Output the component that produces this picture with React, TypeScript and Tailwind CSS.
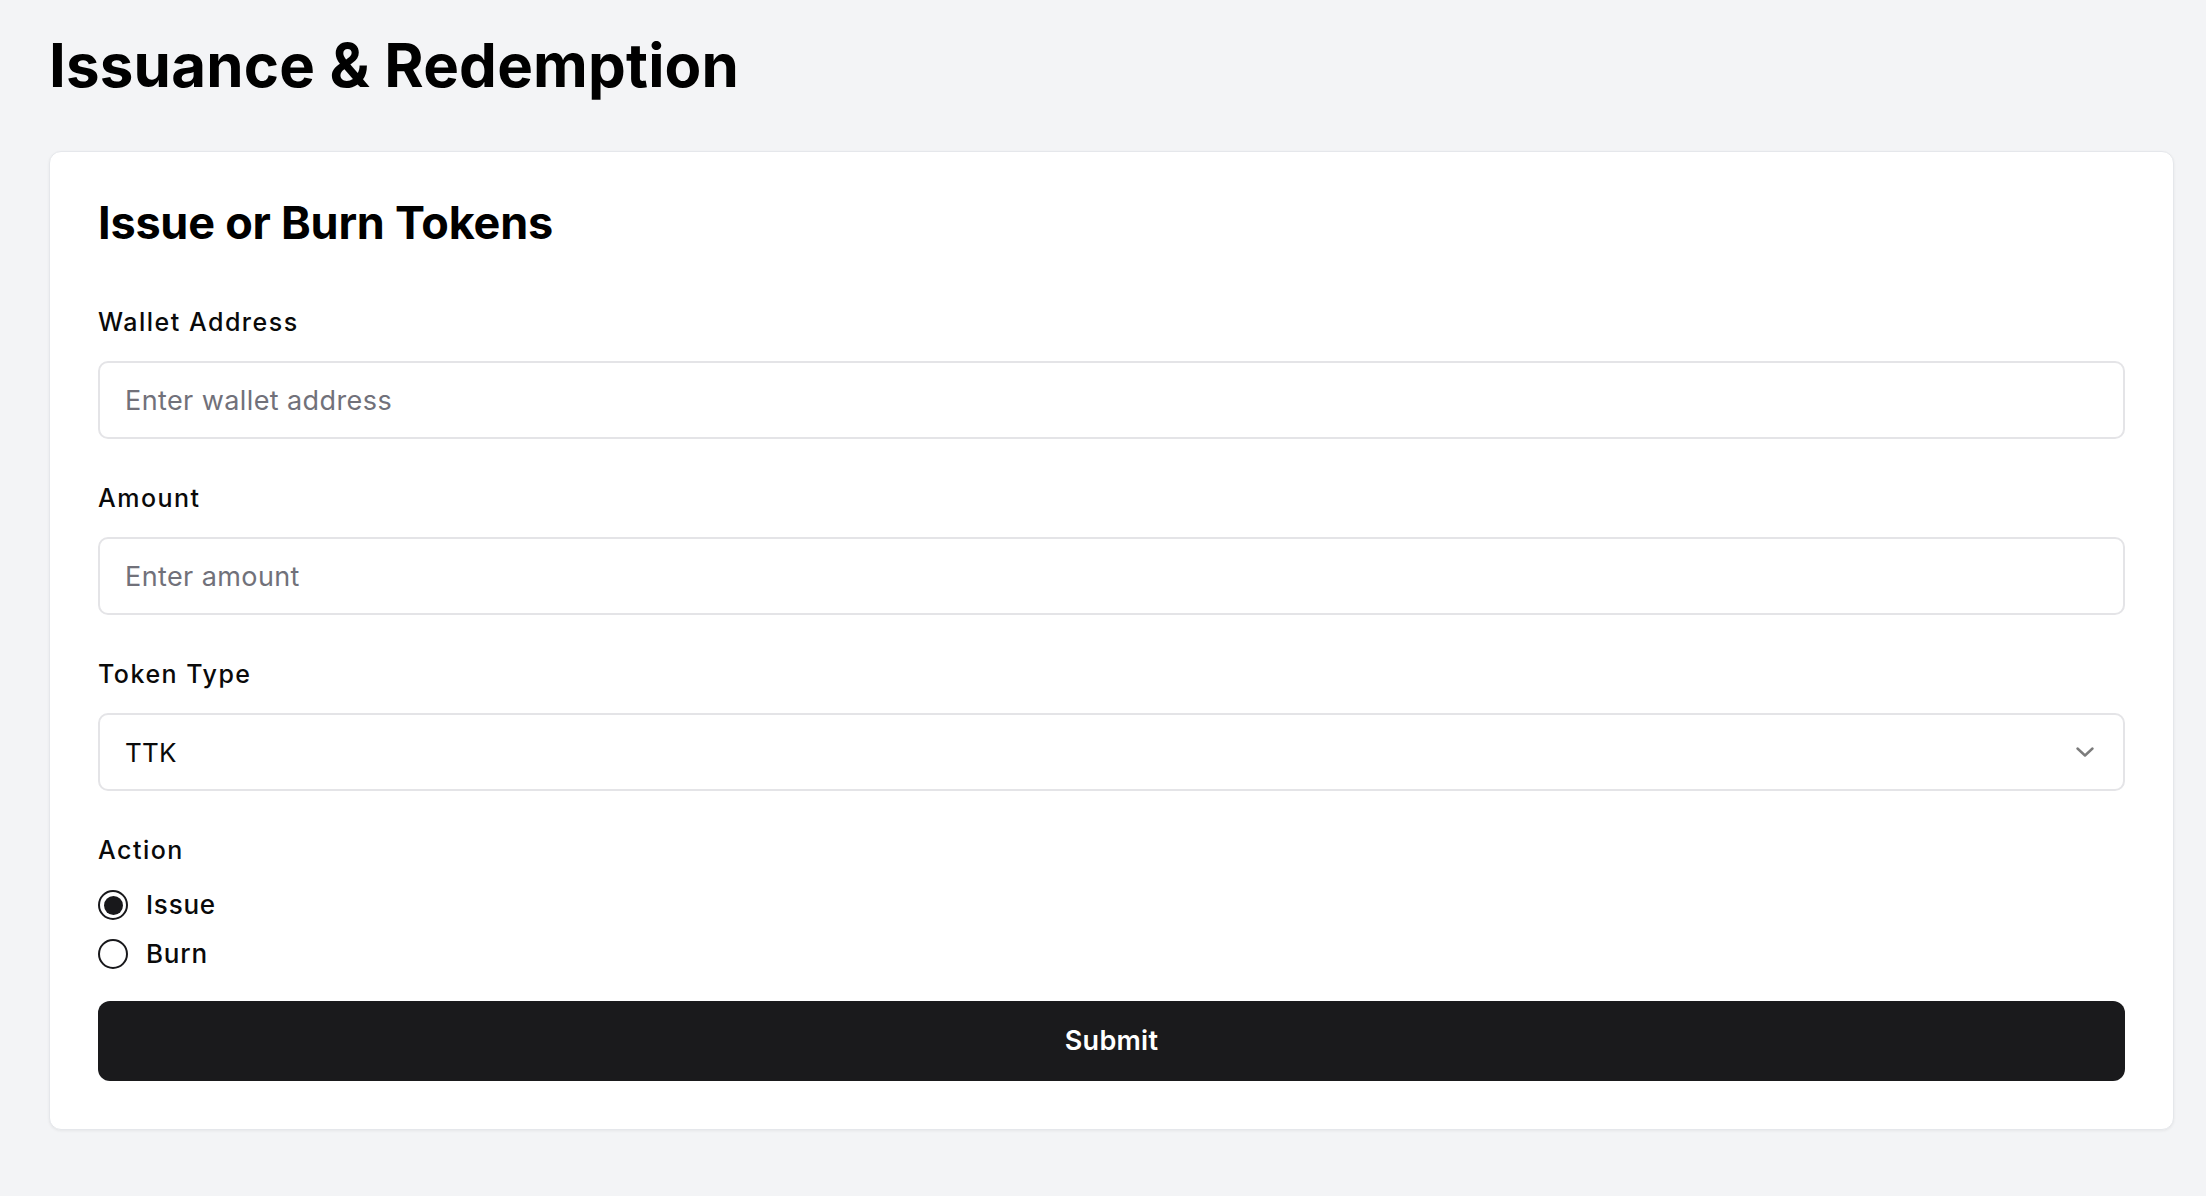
import React, { useState } from "react";

function Radio({ checked }: { checked: boolean }) {
  return (
    <span className="flex h-[30px] w-[30px] shrink-0 items-center justify-center rounded-full border-[2.5px] border-[#18181b] bg-white">
      {checked ? <span className="block h-[19px] w-[19px] rounded-full bg-[#18181b]" /> : null}
    </span>
  );
}

export default function App() {
  const [action, setAction] = useState<"issue" | "burn">("issue");
  return (
    <div
      className="min-h-screen bg-[#f3f4f6] pl-[49px] pr-[32px] pt-[35px] pb-[60px] text-[#0a0a0a]"
      style={{ fontFamily: "Inter, 'Noto Sans', sans-serif" }}
    >
      <h1 className="text-[60px] font-bold leading-[60px] tracking-[0.003em] text-black">
        Issuance &amp; Redemption
      </h1>

      <div className="mt-[56px] rounded-[12px] border border-[#e5e7eb] bg-white px-[48px] pt-[48px] pb-[48px] shadow-[0_1px_3px_rgba(0,0,0,0.06)]">
        <h2 className="text-[45px] font-bold leading-[45px] tracking-[-0.005em] text-black">
          Issue or Burn Tokens
        </h2>

        <div className="mt-[65px] flex flex-col gap-[47px]">
          <div className="flex flex-col gap-[27px]">
            <label className="text-[25px] font-medium leading-[24px] tracking-[0.06em]">Wallet Address</label>
            <input
              placeholder="Enter wallet address"
              className="h-[78px] w-full rounded-[10px] border-2 border-[#e4e4e7] bg-white px-[25px] text-[27px] tracking-[0.015em] text-[#0a0a0a] outline-none placeholder:text-[#71717a]"
            />
          </div>

          <div className="flex flex-col gap-[27px]">
            <label className="text-[25px] font-medium leading-[24px] tracking-[0.06em]">Amount</label>
            <input
              placeholder="Enter amount"
              className="h-[78px] w-full rounded-[10px] border-2 border-[#e4e4e7] bg-white px-[25px] text-[27px] tracking-[0.015em] text-[#0a0a0a] outline-none placeholder:text-[#71717a]"
            />
          </div>

          <div className="flex flex-col gap-[27px]">
            <label className="text-[25px] font-medium leading-[24px] tracking-[0.06em]">Token Type</label>
            <div className="flex h-[78px] w-full items-center justify-between rounded-[10px] border-2 border-[#e4e4e7] bg-white pl-[25px] pr-[29px]">
              <span className="text-[26px] tracking-[0.01em] text-[#0a0a0a]">TTK</span>
              <svg width="18" height="10" viewBox="0 0 18 10" fill="none">
                <polyline points="1.5,1.5 9,8.5 16.5,1.5" stroke="#7c7c7c" strokeWidth="2.4" strokeLinecap="round" strokeLinejoin="round" />
              </svg>
            </div>
          </div>

          <div className="flex flex-col">
            <span className="text-[25px] font-medium leading-[24px] tracking-[0.06em]">Action</span>
            <div className="mt-[28px] flex flex-col gap-[19px]">
              <button type="button" onClick={() => setAction("issue")} className="flex h-[30px] items-center gap-[18px] text-left">
                <Radio checked={action === "issue"} />
                <span className="text-[26px] font-medium leading-[30px] tracking-[0.03em]">Issue</span>
              </button>
              <button type="button" onClick={() => setAction("burn")} className="flex h-[30px] items-center gap-[18px] text-left">
                <Radio checked={action === "burn"} />
                <span className="text-[26px] font-medium leading-[30px] tracking-[0.03em]">Burn</span>
              </button>
            </div>
            <button
              type="button"
              className="mt-[32px] flex h-[80px] w-full items-center justify-center rounded-[12px] bg-[#1a1a1c] text-[27px] font-semibold tracking-[0.01em] text-white"
            >
              Submit
            </button>
          </div>
        </div>
      </div>
    </div>
  );
}
